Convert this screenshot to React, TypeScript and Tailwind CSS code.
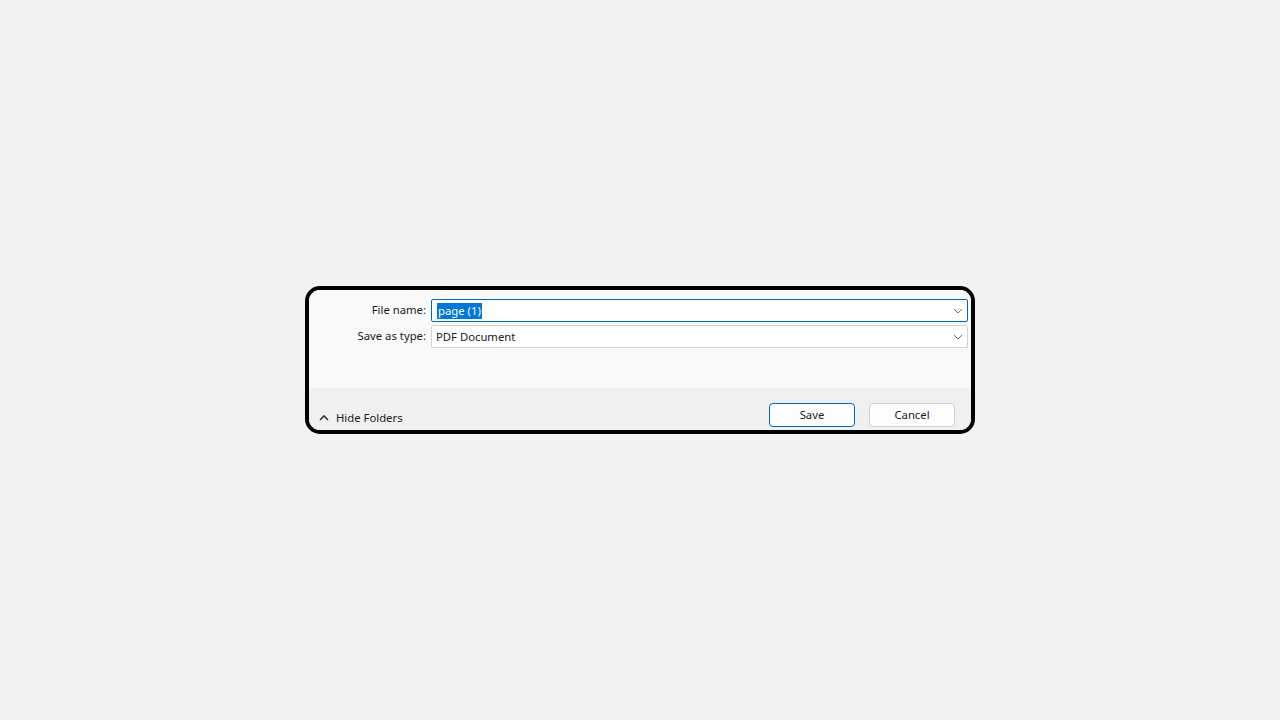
const font = { fontFamily: '"Noto Sans", "Open Sans", sans-serif' };

function Chevron({ up, className }: { up?: boolean; className?: string }) {
  return (
    <svg viewBox="0 0 10 6" className={className} fill="none" stroke="currentColor">
      <path d={up ? "M1 5 L5 1 L9 5" : "M1 1 L5 5 L9 1"} />
    </svg>
  );
}

function ComboRow({ label, focused, value }: { label: string; focused?: boolean; value: string }) {
  return (
    <div className="flex items-center">
      <div className="w-[117px] text-right text-[11.3px] text-[#1b1b1b]">{label}</div>
      <div
        className={
          "ml-[5px] flex h-[23px] flex-1 items-center justify-between rounded-[2px] border bg-white pl-[5px] pr-[4px] " +
          (focused ? "border-[#0067c0]" : "border-[#d3d3d3]")
        }
      >
        {focused ? (
          <span className="bg-[#0078d7] px-[1px] text-[11.3px] leading-[16px] text-white">{value}</span>
        ) : (
          <span className="-ml-[1px] text-[11.3px] leading-[16px] text-[#1b1b1b]">{value}</span>
        )}
        <Chevron className="h-[6px] w-[10px] text-[#707070]" />
      </div>
    </div>
  );
}

export default function App() {
  return (
    <div className="flex min-h-screen items-center justify-center bg-[#f2f2f2]" style={font}>
      <div className="flex h-[148px] w-[670px] flex-col overflow-hidden rounded-[15px] border-4 border-black">
        <div className="flex h-[98px] flex-col gap-[3px] bg-[#f9f9f9] pr-[3px] pt-[9px]">
          <ComboRow label="File name:" value="page (1)" focused />
          <ComboRow label="Save as type:" value="PDF Document" />
        </div>
        <div className="flex flex-1 items-end justify-between bg-[#f0f0f0] pb-[3px] pr-[16px]">
          <div className="flex items-center pl-[10px]">
            <Chevron up className="h-[6px] w-[10px] text-[#333] [&_path]:[stroke-width:1.6px]" />
            <span className="ml-[7px] text-[11.3px] leading-[18px] text-[#1b1b1b]">Hide Folders</span>
          </div>
          <div className="flex gap-[14px]">
            <button className="h-[24px] w-[86px] rounded-[4px] border border-[#0067c0] bg-[#fdfdfd] text-[11.3px] text-[#1b1b1b]">
              Save
            </button>
            <button className="h-[24px] w-[86px] rounded-[4px] border border-[#d0d0d0] bg-[#fdfdfd] text-[11.3px] text-[#1b1b1b]">
              Cancel
            </button>
          </div>
        </div>
      </div>
    </div>
  );
}
